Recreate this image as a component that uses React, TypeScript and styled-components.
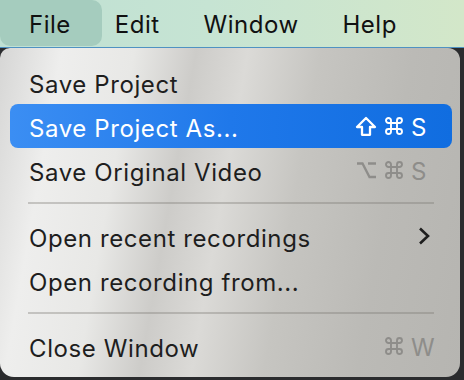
import React from "react";
import styled, { createGlobalStyle } from "styled-components";

const GlobalStyle = createGlobalStyle`
  html, body {
    margin: 0;
    padding: 0;
    width: 464px;
    height: 380px;
    overflow: hidden;
    background: #2b2c2e;
  }
  body {
    font-family: Inter, "Noto Sans", "Liberation Sans", sans-serif;
    -webkit-font-smoothing: antialiased;
  }
`

const Screen = styled.div`
  width: 464px;
  height: 380px;
  display: flex;
  flex-direction: column;
  overflow: hidden;
`

const MenuBar = styled.div`
  height: 48px;
  flex-shrink: 0;
  display: flex;
  align-items: stretch;
  padding: 0 0 0 7px;
  background: linear-gradient(90deg, #bfe0d3 0%, #c6e4d3 45%, #d3e7c9 100%);
  border-bottom: 1px solid #4f92c2;
  box-sizing: border-box;
`

const MenuTitle = styled.div<{ $active?: boolean }>`
  position: relative;
  display: flex;
  align-items: center;
  padding: 2px 22px 0;
  font-size: 24px;
  letter-spacing: 0.5px;
  color: #111;
  z-index: 0;

  &::before {
    content: "";
    display: ${p => (p.$active ? "block" : "none")};
    position: absolute;
    top: 0;
    bottom: 1px;
    left: -7px;
    right: -9px;
    border-radius: 0 10px 10px 10px;
    background: #a5ccbe;
    z-index: -1;
  }
`

const Stage = styled.div`
  flex: 1;
  display: flex;
  align-items: flex-start;
  background: #2b2c2e;
`

const Panel = styled.div`
  width: 460px;
  box-sizing: border-box;
  padding: 12px 0 9px;
  border-radius: 10px 12px 14px 14px;
  background: linear-gradient(
    100deg,
    #d6d6d5 0%,
    #eeeeed 12%,
    #e8e8e6 26%,
    #cdccc9 38%,
    #dbdad7 48%,
    #c6c5c1 62%,
    #bbbab6 80%,
    #b6b5b1 100%
  );
  display: flex;
  flex-direction: column;
`

const Row = styled.div<{ $selected?: boolean }>`
  height: 44px;
  margin: 0 8px 0 10px;
  padding: 0 18px 0 19px;
  border-radius: 8px;
  display: flex;
  align-items: center;
  justify-content: space-between;
  font-size: 24px;
  letter-spacing: 0.6px;
  color: ${p => (p.$selected ? "#ffffff" : "#1e1e1e")};
  background: ${p =>
    p.$selected ? "linear-gradient(90deg, #3b8ef3 0%, #1f78ea 50%, #106de0 100%)" : "transparent"};
`

const Label = styled.span`
  padding-top: 4px;
`

const Shortcut = styled.span<{ $dim?: boolean }>`
  display: flex;
  align-items: center;
  gap: 7px;
  color: ${p => (p.$dim ? "#8e8d8a" : "inherit")};
`

const Key = styled.span`
  width: 23px;
  padding-top: 3px;
  line-height: 1;
  letter-spacing: 0;
`

const Separator = styled.div`
  height: 22px;
  display: flex;
  align-items: center;
  padding: 0 26px 0 28px;

  &::after {
    content: "";
    flex: 1;
    height: 1.5px;
    background: rgba(120, 118, 112, 0.35);
  }
`

const ShiftIcon = () => (
  <svg width="22" height="21" viewBox="0 0 22 21">
    <path
      d="M11 2 L20 11 H15 V18.8 H7 V11 H2 Z"
      fill="none"
      stroke="currentColor"
      strokeWidth="2.3"
      strokeLinejoin="round"
    />
  </svg>
)

const CommandIcon = () => (
  <svg width="20" height="20" viewBox="0 0 20 20">
    <path
      d="M7 7V4.5A2.5 2.5 0 1 0 4.5 7H15.5A2.5 2.5 0 1 0 13 4.5V15.5A2.5 2.5 0 1 0 15.5 13H4.5A2.5 2.5 0 1 0 7 15.5Z"
      fill="none"
      stroke="currentColor"
      strokeWidth="1.9"
    />
  </svg>
)

const OptionIcon = () => (
  <svg width="21" height="20" viewBox="0 0 21 20">
    <path
      d="M1 3.5 H6.5 L13.5 17 H20 M12 3.5 H20"
      fill="none"
      stroke="currentColor"
      strokeWidth="2.3"
    />
  </svg>
)

const Chevron = () => (
  <svg width="14" height="20" viewBox="0 0 14 20" style={{ marginRight: 3 }}>
    <path d="M3 2.5 L11 10 L3 17.5" fill="none" stroke="#1e1e1e" strokeWidth="2.6" />
  </svg>
)

export default function App() {
  return (
    <>
      <GlobalStyle />
      <Screen>
        <MenuBar>
          <MenuTitle $active>File</MenuTitle>
          <MenuTitle>Edit</MenuTitle>
          <MenuTitle>Window</MenuTitle>
          <MenuTitle>Help</MenuTitle>
        </MenuBar>
        <Stage>
          <Panel>
            <Row>
              <Label>Save Project</Label>
            </Row>
            <Row $selected>
              <Label>Save Project As...</Label>
              <Shortcut>
                <ShiftIcon />
                <CommandIcon />
                <Key>S</Key>
              </Shortcut>
            </Row>
            <Row>
              <Label>Save Original Video</Label>
              <Shortcut $dim>
                <OptionIcon />
                <CommandIcon />
                <Key>S</Key>
              </Shortcut>
            </Row>
            <Separator />
            <Row>
              <Label>Open recent recordings</Label>
              <Chevron />
            </Row>
            <Row>
              <Label>Open recording from...</Label>
            </Row>
            <Separator />
            <Row>
              <Label>Close Window</Label>
              <Shortcut $dim>
                <CommandIcon />
                <Key>W</Key>
              </Shortcut>
            </Row>
          </Panel>
        </Stage>
      </Screen>
    </>
  );
}
